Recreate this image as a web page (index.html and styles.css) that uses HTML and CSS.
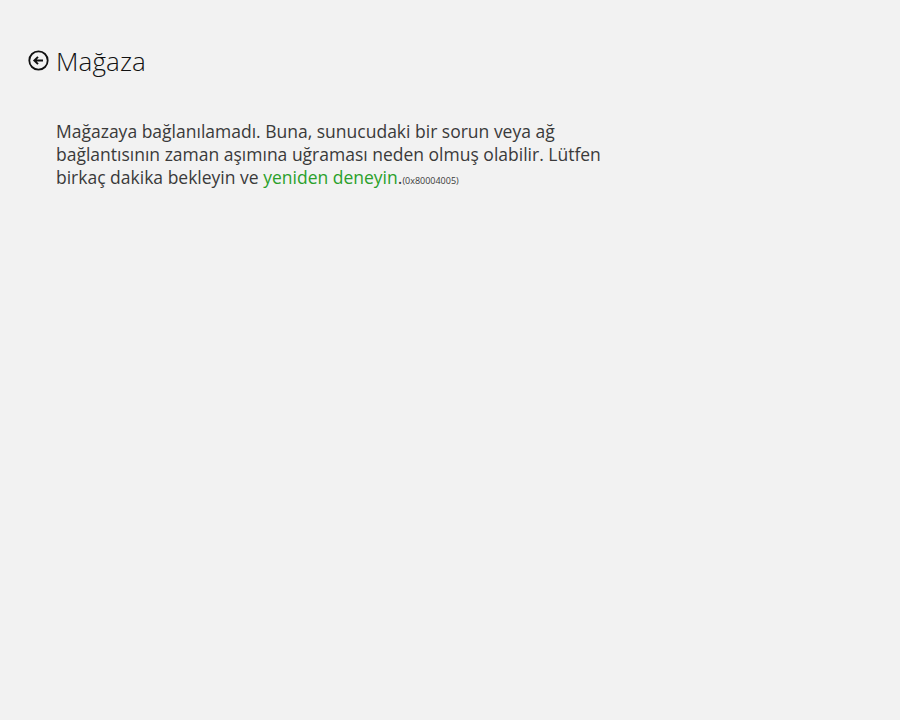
FILE: index.html
```html
<!DOCTYPE html>
<html lang="tr">
<head>
    <meta charset="UTF-8">
    <title>Mağaza</title>
    <link rel="stylesheet" href="styles.css">
</head>
<body>
    <header class="page-header">
        <button class="back-button" aria-label="Geri">
            <svg width="21" height="21" viewBox="0 0 21 21">
                <circle cx="10.5" cy="10.5" r="9.2" fill="none" stroke="#111" stroke-width="1.8"/>
                <path d="M15 10.5H6.5M10 6.8L6.3 10.5L10 14.2" fill="none" stroke="#111" stroke-width="1.9"/>
            </svg>
        </button>
        <h1 class="page-title">Mağaza</h1>
    </header>
    <main class="content">
        <p class="error-message">
            Mağazaya bağlanılamadı. Buna, sunucudaki bir sorun veya ağ
            bağlantısının zaman aşımına uğraması neden olmuş olabilir. Lütfen
            birkaç dakika bekleyin ve <a href="#" class="retry-link">yeniden deneyin</a>.<span class="error-code">(0x80004005)</span>
        </p>
    </main>
</body>
</html>
```

FILE: styles.css
```css
* { box-sizing: border-box; margin: 0; padding: 0; }
body {
    background-color: #f2f2f2; color: #333;
    font-family: 'Open Sans', 'Noto Sans', sans-serif;
    width: 900px; height: 720px; overflow: hidden;
}
.page-header { display: flex; align-items: center; gap: 7px; padding: 41px 0 0 28px; height: 80px; }
.back-button { display: flex; background: none; border: none; cursor: pointer; }
.page-title { font-weight: 300; font-size: 26px; color: #111; letter-spacing: 0.1px; }
.content { padding: 40px 0 0 56px; }
.error-message { width: 580px; font-size: 17.5px; line-height: 23px; color: #3a3a3a; font-weight: 400; }
.retry-link { color: #2aa02a; text-decoration: none; }
.error-code { font-size: 9px; color: #3a3a3a; }
```
